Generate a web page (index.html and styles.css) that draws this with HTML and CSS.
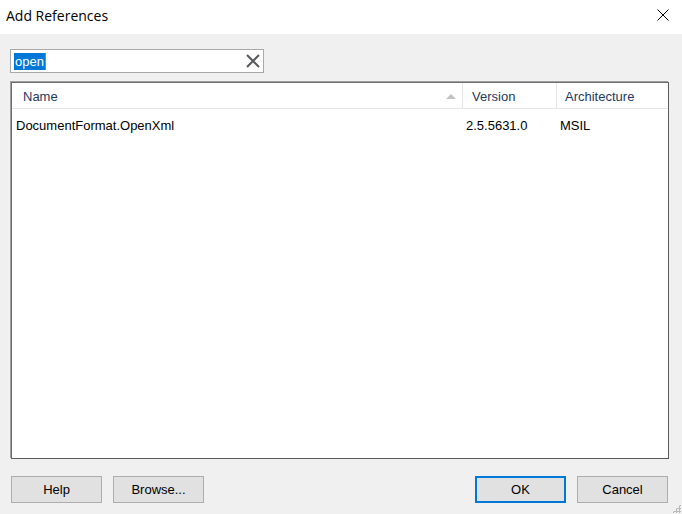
FILE: index.html
```html
<!DOCTYPE html>
<html>
<head>
<meta charset="utf-8">
<link rel="stylesheet" href="styles.css">
</head>
<body>
<div class="dialog">
  <div class="titlebar">
    <span class="title">Add References</span>
    <span class="close">
      <svg width="12" height="12" viewBox="0 0 12 12"><path d="M0.5 0.5 L11.5 11.5 M11.5 0.5 L0.5 11.5" stroke="#000" stroke-width="1" fill="none"/></svg>
    </span>
  </div>
  <div class="content">
    <div class="search">
      <span class="query"><span class="sel">open</span><span class="caret"></span></span>
      <span class="clear">
        <svg width="16" height="16" viewBox="0 0 16 16"><path d="M2 2 L14 14 M14 2 L2 14" stroke="#555a60" stroke-width="2" fill="none"/></svg>
      </span>
    </div>
    <div class="list">
      <div class="header">
        <div class="col name">Name<span class="sort"></span></div>
        <div class="col version">Version</div>
        <div class="col arch">Architecture</div>
      </div>
      <div class="row">
        <div class="cell name">DocumentFormat.OpenXml</div>
        <div class="cell version">2.5.5631.0</div>
        <div class="cell arch">MSIL</div>
      </div>
    </div>
    <div class="buttons">
      <div class="left">
        <button class="btn">Help</button>
        <button class="btn">Browse...</button>
      </div>
      <div class="right">
        <button class="btn default">OK</button>
        <button class="btn">Cancel</button>
      </div>
    </div>
  </div>
  <div class="grip"></div>
</div>
</body>
</html>
```

FILE: styles.css
```css
html, body {
  margin: 0;
  padding: 0;
}
body {
  width: 682px;
  height: 514px;
  overflow: hidden;
  background: #f0f0f0;
  font-family: "Liberation Sans", Arial, sans-serif;
  font-size: 13px;
  color: #000;
}
.dialog {
  position: relative;
  width: 682px;
  height: 514px;
  display: flex;
  flex-direction: column;
}
.titlebar {
  height: 34px;
  background: #fff;
  display: flex;
  align-items: center;
  justify-content: space-between;
  padding: 0 13px 4px 6px;
  box-sizing: border-box;
}
.title {
  font-family: "Open Sans", "Noto Sans", sans-serif;
  font-size: 14px;
  color: #000;
}
.close {
  display: flex;
  width: 12px;
  height: 12px;
}
.content {
  padding: 15px 13px 0 10px;
  display: flex;
  flex-direction: column;
}
.search {
  width: 254px;
  height: 24px;
  box-sizing: border-box;
  border: 1px solid #a9a9a9;
  background: #fff;
  display: flex;
  align-items: center;
  justify-content: space-between;
  padding: 0 2px 0 2px;
}
.query {
  display: flex;
  align-items: center;
}
.sel {
  background: #0078d7;
  color: #fff;
  line-height: 17px;
  padding: 0 1px;
  margin-left: 1px;
}
.caret {
  width: 1px;
  height: 17px;
  background: #e07020;
}
.clear {
  display: flex;
  width: 16px;
  height: 16px;
}
.list {
  margin-top: 9px;
  width: 658px;
  height: 377px;
  box-sizing: border-box;
  background: #fff;
  border: 1px solid #5a5a5a;
  border-top-color: #6d6d6d;
  border-left-color: #6d6d6d;
  box-shadow: -1px -1px 0 #a0a0a0;
  margin-left: 1px;
}
.header {
  display: flex;
  height: 26px;
  border-bottom: 1px solid #e5e5e5;
  box-sizing: border-box;
}
.col {
  display: flex;
  align-items: center;
  padding-left: 9px;
  padding-top: 2px;
  box-sizing: border-box;
  color: #1e395b;
  border-right: 1px solid #e5e5e5;
  position: relative;
}
.col.name { width: 451px; padding-left: 11px; }
.col.version { width: 94px; }
.col.arch { flex: 1; border-right: none; padding-left: 8px; }
.sort {
  position: absolute;
  right: 6px;
  top: 11px;
  width: 0;
  height: 0;
  border-left: 5px solid transparent;
  border-right: 5px solid transparent;
  border-bottom: 5px solid #c4c4c4;
}
.row {
  display: flex;
  height: 32px;
  align-items: center;
}
.cell {
  box-sizing: border-box;
}
.cell.name { width: 451px; padding-left: 4px; }
.cell.version { width: 94px; padding-left: 3px; }
.cell.arch { flex: 1; padding-left: 3px; }
.buttons {
  margin-top: 17px;
  display: flex;
  justify-content: space-between;
  padding-left: 1px;
  padding-right: 1px;
}
.left, .right {
  display: flex;
  gap: 11px;
}
.btn {
  width: 91px;
  height: 27px;
  box-sizing: border-box;
  background: #e1e1e1;
  border: 1px solid #adadad;
  font-family: "Liberation Sans", Arial, sans-serif;
  font-size: 13px;
  color: #000;
  padding: 0;
  margin: 0;
}
.btn.default {
  border: 2px solid #0078d7;
}
.grip {
  position: absolute;
  right: 1px;
  bottom: 1px;
  width: 9px;
  height: 9px;
  background-image: radial-gradient(circle, #b8b8b8 1px, transparent 1.2px);
  background-size: 3px 3px;
  clip-path: polygon(100% 0, 100% 100%, 0 100%);
}
```
